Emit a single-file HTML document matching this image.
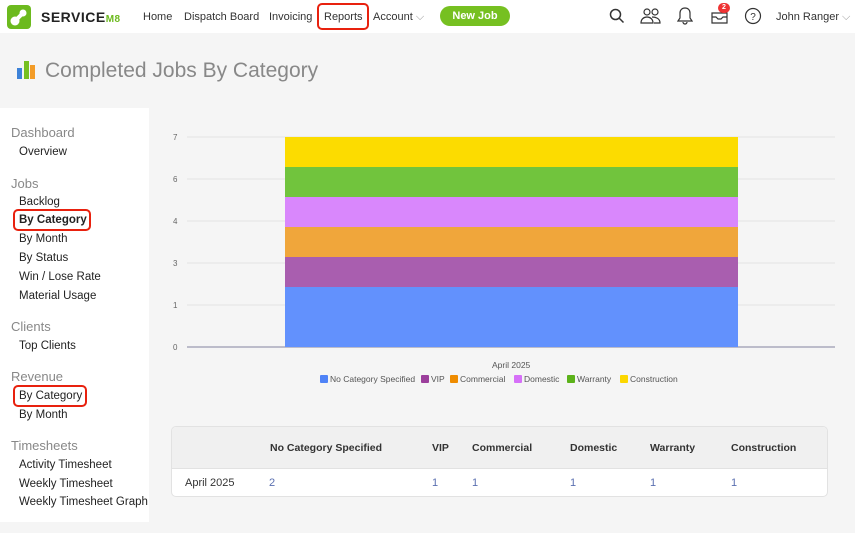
<!DOCTYPE html>
<html><head><meta charset="utf-8"><style>
*{margin:0;padding:0;box-sizing:border-box}
body{width:855px;height:533px;overflow:hidden;background:#f5f5f5;font-family:"Liberation Sans",sans-serif;position:relative;color:#333}
.a{position:absolute;white-space:nowrap}
.top{position:absolute;left:0;top:0;width:855px;height:33px;background:#fff}
.nav{font-size:11px;color:#333;top:11px}
.side{position:absolute;left:0;top:108px;width:149px;height:414px;background:#fff}
.h{font-size:13px;color:#888;left:11px}
.i{font-size:11.5px;color:#222;left:19px}
.box{position:absolute;border:2.5px solid #e8210e;border-radius:5px}
.th{font-size:10.5px;color:#333;font-weight:bold;top:442px}
.td{font-size:11px;color:#5a6fb0;top:477px}
.lg{font-size:8.5px;color:#555;top:374px}
.sw{display:inline-block;width:8px;height:8px;vertical-align:-1px;margin-right:2px;border-radius:1px}
</style></head><body>
<div class="top"></div>
<svg class="a" style="left:7px;top:5px" width="24" height="24" viewBox="0 0 24 24"><rect width="24" height="24" rx="4" fill="#6cba1e"/><circle cx="8" cy="16" r="4.5" fill="#fff"/><circle cx="16" cy="8" r="3.5" fill="#fff"/><path d="M8 16L16 8" stroke="#fff" stroke-width="4"/></svg>
<div class="a" style="left:41px;top:9px;font-size:14px;font-weight:bold;letter-spacing:0.5px;color:#222">SERVICE<span style="color:#6cba1e;font-size:10px">M8</span></div>
<div class="a nav" style="left:143px">Home</div>
<div class="a nav" style="left:184px">Dispatch Board</div>
<div class="a nav" style="left:269px">Invoicing</div>
<div class="a nav" style="left:324px">Reports</div>
<div class="box" style="left:317px;top:3px;width:52px;height:27px"></div>
<div class="a nav" style="left:373px">Account <span style="color:#999">⌵</span></div>
<div class="a" style="left:440px;top:6px;width:70px;height:20px;background:#76c021;border-radius:10px;color:#fff;font-size:11px;font-weight:bold;text-align:center;line-height:20px">New Job</div>
<svg class="a" style="left:608px;top:7px" width="18" height="18" viewBox="0 0 18 18" fill="none" stroke="#333" stroke-width="1.5"><circle cx="7.5" cy="7.5" r="5"/><path d="M11 11l4.5 4.5"/></svg>
<svg class="a" style="left:640px;top:7px" width="22" height="18" viewBox="0 0 22 18" fill="none" stroke="#333" stroke-width="1.2"><circle cx="7" cy="5" r="3"/><circle cx="15" cy="5" r="3"/><path d="M1 16c0-4 3-6 6-6s6 2 6 6zM12 10c3 0 8 1 8 6h-6"/></svg>
<svg class="a" style="left:677px;top:6px" width="16" height="19" viewBox="0 0 16 19" fill="none" stroke="#333" stroke-width="1.2"><path d="M8 2c-3 0-5 2-5 5v5l-2 3h14l-2-3V7c0-3-2-5-5-5zM6 16a2 2 0 0 0 4 0"/></svg>
<svg class="a" style="left:710px;top:8px" width="19" height="16" viewBox="0 0 19 16" fill="none" stroke="#333" stroke-width="1.2"><path d="M2 5h15v10H2zM2 9h4l2 2h3l2-2h4"/></svg>
<div class="a" style="left:718px;top:3px;width:12px;height:10px;border-radius:5px;background:#e33;color:#fff;font-size:7px;text-align:center;line-height:10px;font-weight:bold">2</div>
<svg class="a" style="left:744px;top:7px" width="18" height="18" viewBox="0 0 18 18"><circle cx="9" cy="9" r="7.5" fill="none" stroke="#333" stroke-width="1.2"/><text x="9" y="13" font-size="10" text-anchor="middle" fill="#333" font-family="Liberation Sans">?</text></svg>
<div class="a nav" style="left:776px">John Ranger <span style="color:#999">⌵</span></div>

<svg class="a" style="left:17px;top:61px" width="19" height="18"><rect x="0" y="7" width="5" height="11" fill="#3d82d8"/><rect x="7" y="0" width="5" height="18" fill="#76c021"/><rect x="13" y="4" width="5" height="14" fill="#f39c28"/></svg>
<div class="a" style="left:45px;top:59px;font-size:21px;color:#888">Completed Jobs By Category</div>

<div class="side"></div>
<div class="a h" style="top:125px">Dashboard</div>
<div class="a i" style="top:146px">Overview</div>
<div class="a h" style="top:176px">Jobs</div>
<div class="a i" style="top:196px">Backlog</div>
<div class="a i" style="top:214px;font-weight:bold">By Category</div>
<div class="box" style="left:13px;top:209px;width:78px;height:22px"></div>
<div class="a i" style="top:233px">By Month</div>
<div class="a i" style="top:252px">By Status</div>
<div class="a i" style="top:271px">Win / Lose Rate</div>
<div class="a i" style="top:290px">Material Usage</div>
<div class="a h" style="top:319px">Clients</div>
<div class="a i" style="top:340px">Top Clients</div>
<div class="a h" style="top:369px">Revenue</div>
<div class="a i" style="top:390px">By Category</div>
<div class="box" style="left:13px;top:385px;width:74px;height:22px"></div>
<div class="a i" style="top:409px">By Month</div>
<div class="a h" style="top:438px">Timesheets</div>
<div class="a i" style="top:459px">Activity Timesheet</div>
<div class="a i" style="top:478px">Weekly Timesheet</div>
<div class="a i" style="top:496px">Weekly Timesheet Graph</div>

<svg class="a" style="left:160px;top:125px" width="690" height="235">
<g stroke="#e3e3e3" stroke-width="1"><line x1="27" x2="675" y1="12" y2="12"/><line x1="27" x2="675" y1="54" y2="54"/><line x1="27" x2="675" y1="96" y2="96"/><line x1="27" x2="675" y1="138" y2="138"/><line x1="27" x2="675" y1="180" y2="180"/></g>
<line x1="27" x2="675" y1="222" y2="222" stroke="#aab" stroke-width="1.5"/>
<g font-size="8" fill="#666" font-family="Liberation Sans"><text x="13" y="15">7</text><text x="13" y="57">6</text><text x="13" y="99">4</text><text x="13" y="141">3</text><text x="13" y="183">1</text><text x="13" y="225">0</text></g>
<rect x="125" y="12" width="453" height="30" fill="#fcdc00"/>
<rect x="125" y="42" width="453" height="30" fill="#71c43d"/>
<rect x="125" y="72" width="453" height="30" fill="#d987fc"/>
<rect x="125" y="102" width="453" height="30" fill="#f0a63b"/>
<rect x="125" y="132" width="453" height="30" fill="#a95eaf"/>
<rect x="125" y="162" width="453" height="60" fill="#6291fd"/>
</svg>
<div class="a" style="left:492px;top:360px;font-size:8.5px;color:#555">April 2025</div>
<div class="a lg" style="left:320px"><span class="sw" style="background:#4f83f7"></span>No Category Specified</div>
<div class="a lg" style="left:421px"><span class="sw" style="background:#9c3f9c"></span>VIP</div>
<div class="a lg" style="left:450px"><span class="sw" style="background:#ef8c00"></span>Commercial</div>
<div class="a lg" style="left:514px"><span class="sw" style="background:#d670f8"></span>Domestic</div>
<div class="a lg" style="left:567px"><span class="sw" style="background:#5cb21a"></span>Warranty</div>
<div class="a lg" style="left:620px"><span class="sw" style="background:#fcd700"></span>Construction</div>

<div class="a" style="left:171px;top:426px;width:657px;height:71px;border:1px solid #e2e2e2;border-radius:5px;background:#fff;overflow:hidden"><div style="height:42px;background:#f0f0f0;border-bottom:1px solid #e2e2e2"></div></div>
<div class="a th" style="left:270px">No Category Specified</div>
<div class="a th" style="left:432px">VIP</div>
<div class="a th" style="left:472px">Commercial</div>
<div class="a th" style="left:570px">Domestic</div>
<div class="a th" style="left:650px">Warranty</div>
<div class="a th" style="left:731px">Construction</div>
<div class="a td" style="left:185px;color:#333">April 2025</div>
<div class="a td" style="left:269px">2</div>
<div class="a td" style="left:432px">1</div>
<div class="a td" style="left:472px">1</div>
<div class="a td" style="left:570px">1</div>
<div class="a td" style="left:650px">1</div>
<div class="a td" style="left:731px">1</div>
</body></html>
